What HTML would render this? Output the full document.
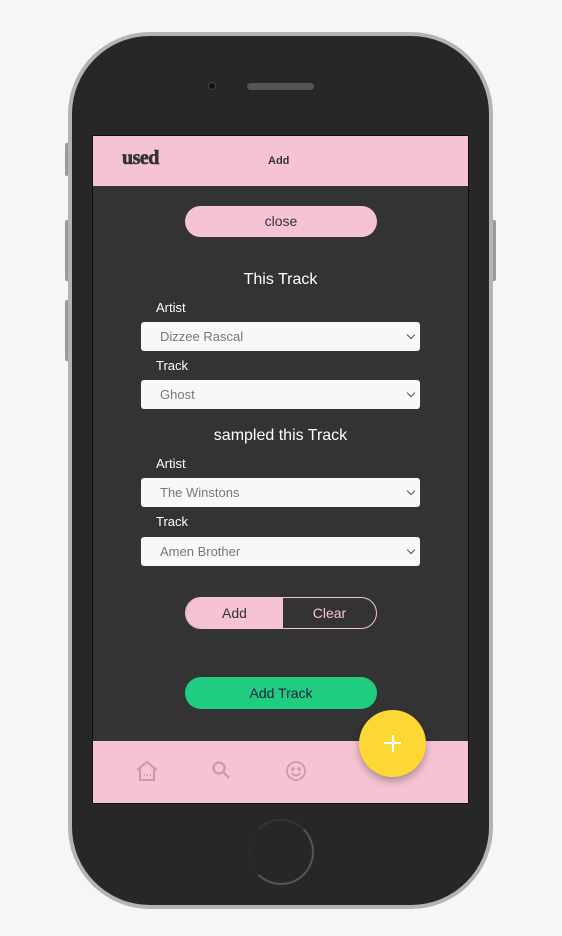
<!DOCTYPE html>
<html><head><style>
*{margin:0;padding:0;box-sizing:border-box}
body{width:562px;height:936px;background:#f5f7f7;position:relative;overflow:hidden;font-family:"Liberation Sans",sans-serif}
.abs{position:absolute}
.btnside{position:absolute;background:#9a9a9a;border-radius:2px}
.phone{left:68px;top:32px;width:425px;height:877px;border-radius:82px;background:#b4b4b4}
.inner{left:72px;top:36px;width:417px;height:869px;border-radius:78px;background:#272727}
.screen{left:92px;top:135px;width:377px;height:669px;background:#333;border:1px solid #111}
.sel{position:absolute;left:48px;width:279px;height:29px;background:#f8f8f8;border-radius:3px;color:#777;font-size:13px;line-height:29px;padding-left:19px}
.sel:after{content:"";position:absolute;right:6px;top:10px;width:5px;height:5px;border-right:1.5px solid #555;border-bottom:1.5px solid #555;transform:rotate(45deg)}
.lbl{position:absolute;left:63px;color:#fff;font-size:13px}
.h{position:absolute;left:0;width:375px;text-align:center;color:#fff;font-size:16px}
</style></head><body>
<div class="btnside" style="left:65px;top:143px;width:5px;height:33px"></div>
<div class="btnside" style="left:65px;top:220px;width:5px;height:61px"></div>
<div class="btnside" style="left:65px;top:300px;width:5px;height:61px"></div>
<div class="btnside" style="left:491px;top:220px;width:5px;height:61px"></div>
<div class="abs phone"></div>
<div class="abs inner"></div>
<div class="abs" style="left:208px;top:82px;width:8px;height:8px;border-radius:50%;background:#111;border:1px solid #444"></div>
<div class="abs" style="left:247px;top:83px;width:67px;height:7px;border-radius:4px;background:#555"></div>
<div class="abs" style="left:248px;top:819px;width:66px;height:66px;border-radius:50%;border:2px solid #555;border-left-color:#2a2a2a;border-top-color:#333"></div>
<div class="abs screen">
 <div class="abs" style="left:0;top:0;width:375px;height:50px;background:#f6c3d3"></div>
 <div class="abs" style="left:29px;top:11px;font-family:'Liberation Serif',serif;font-weight:900;font-size:20px;color:#333;letter-spacing:-0.5px;-webkit-text-stroke:0.6px #333">used</div>
 <div class="abs" style="left:175px;top:19px;font-weight:bold;font-size:11px;color:#333">Add</div>
 <div class="abs" style="left:92px;top:70px;width:192px;height:31px;border-radius:16px;background:#f6c3d3;color:#333;text-align:center;line-height:31px;font-size:14px">close</div>
 <div class="h" style="top:135px">This Track</div>
 <div class="lbl" style="top:164px">Artist</div>
 <div class="sel" style="top:186px">Dizzee Rascal</div>
 <div class="lbl" style="top:222px">Track</div>
 <div class="sel" style="top:244px">Ghost</div>
 <div class="h" style="top:291px">sampled this Track</div>
 <div class="lbl" style="top:320px">Artist</div>
 <div class="sel" style="top:342px">The Winstons</div>
 <div class="lbl" style="top:378px">Track</div>
 <div class="sel" style="top:401px">Amen Brother</div>
 <div class="abs" style="left:92px;top:461px;width:192px;height:32px;border-radius:16px;border:1px solid #f6c3d3;overflow:hidden;display:flex;font-size:14px">
  <div style="width:97px;background:#f6c3d3;color:#333;text-align:center;line-height:30px">Add</div>
  <div style="flex:1;color:#f6c3d3;text-align:center;line-height:30px">Clear</div>
 </div>
 <div class="abs" style="left:92px;top:541px;width:192px;height:32px;border-radius:16px;background:#20cc80;color:#224;text-align:center;line-height:32px;font-size:14px">Add Track</div>
 <div class="abs" style="left:0;top:605px;width:375px;height:62px;background:#f6c3d3"></div>
 <svg class="abs" style="left:42px;top:624px" width="24" height="22" viewBox="0 0 24 22" fill="none" stroke="#c99aa8" stroke-width="2"><path d="M2 10 L12 2 L22 10 M5 8 V20 H19 V8"/><path d="M9 15h1M12 15h1M15 15h1"/></svg>
 <svg class="abs" style="left:118px;top:624px" width="22" height="22" viewBox="0 0 22 22" fill="none" stroke="#c99aa8" stroke-width="2.2"><circle cx="8" cy="8" r="5.5"/><path d="M12 12 L18 18"/></svg>
 <svg class="abs" style="left:192px;top:624px" width="22" height="22" viewBox="0 0 22 22" fill="none" stroke="#c99aa8" stroke-width="1.8"><circle cx="11" cy="11" r="9"/><circle cx="8" cy="9" r=".8" fill="#c99aa8"/><circle cx="14" cy="9" r=".8" fill="#c99aa8"/><path d="M6.5 13 Q11 18 15.5 13"/></svg>
 <div class="abs" style="left:266px;top:574px;width:67px;height:67px;border-radius:50%;background:#fdd835;box-shadow:0 4px 8px rgba(0,0,0,.3)"></div>
 <div class="abs" style="left:291px;top:606px;width:17px;height:2px;background:#fff"></div>
 <div class="abs" style="left:298.5px;top:598.5px;width:2px;height:17px;background:#fff"></div>
</div>
</body></html>
